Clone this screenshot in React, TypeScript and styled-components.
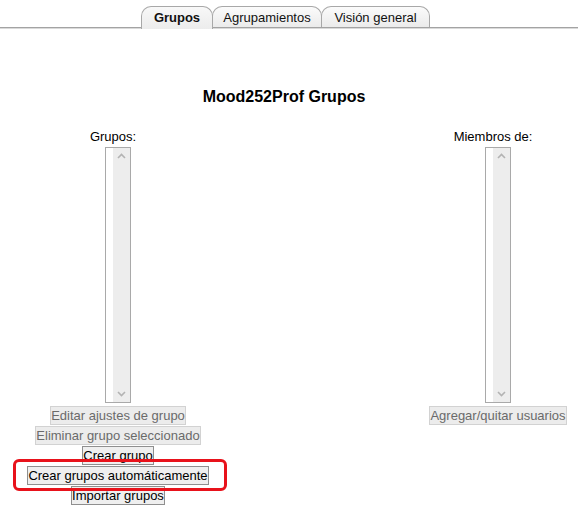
import React from "react";
import styled, { createGlobalStyle, css } from "styled-components";

const GlobalStyle = createGlobalStyle`
  html, body {
    margin: 0;
    padding: 0;
    background: #ffffff;
    font-family: "Liberation Sans", Arial, sans-serif;
    color: #000;
  }
`;

const Page = styled.div`
  width: 578px;
`;

const TabBar = styled.div`
  display: flex;
  justify-content: center;
  align-items: flex-end;
  padding: 6px 6px 0 0;
  height: 21px;
  border-bottom: 1px solid #a3a3a3;
  box-shadow: 0 1px 0 #dadada;
`;

const Tab = styled.div<{ $active?: boolean; $w: number }>`
  box-sizing: border-box;
  width: ${(p) => p.$w}px;
  height: 21px;
  margin-left: -1px;
  padding-top: 2px;
  border: 1px solid #a8a8a8;
  border-bottom: none;
  border-radius: 10px 10px 0 0;
  background: linear-gradient(#fbfbfb, #ebebeb);
  font-size: 13px;
  line-height: 17px;
  text-align: center;
  color: #111;
  white-space: nowrap;
  position: relative;
  ${(p) =>
    p.$active &&
    css`
      font-weight: bold;
      height: 23px;
      margin-bottom: -2px;
      background: linear-gradient(#f8f8f8, #ececec);
      z-index: 1;
    `}
`;

const Title = styled.h2`
  margin: 60px 0 0;
  padding-right: 10px;
  font-size: 16px;
  line-height: 18px;
  font-weight: bold;
  text-align: center;
`;

const Columns = styled.div`
  display: flex;
  justify-content: space-between;
  padding: 0 6px 0 8px;
  margin-top: 23px;
`;

const Column = styled.div<{ $w: number }>`
  width: ${(p) => p.$w}px;
  display: flex;
  flex-direction: column;
  align-items: center;
`;

const Label = styled.div`
  font-size: 13px;
  line-height: 16px;
  padding-right: 10px;
  margin-bottom: 2px;
`;

const ListBox = styled.div`
  box-sizing: border-box;
  width: 26px;
  height: 256px;
  border: 1px solid #a9a9a9;
  display: flex;
  background: #fff;
`;

const ListArea = styled.div`
  flex: 1;
`;

const ScrollTrack = styled.div`
  width: 17px;
  background: #ededed;
  display: flex;
  flex-direction: column;
  justify-content: space-between;
  align-items: center;
  padding: 5px 0;
`;

const Buttons = styled.div`
  margin-top: 3px;
  display: flex;
  flex-direction: column;
  align-items: center;
  gap: 1px;
`;

const Btn = styled.button<{ $disabled?: boolean }>`
  box-sizing: border-box;
  height: 19px;
  margin: 0;
  padding: 0;
  font-family: "Liberation Sans", Arial, sans-serif;
  font-size: 13px;
  line-height: 17px;
  white-space: nowrap;
  border-radius: 0;
  ${(p) =>
    p.$disabled
      ? css`
          border: 1px solid #d2d2d2;
          background: #ececec;
          color: #6a6a6a;
        `
      : css`
          border: 1px solid #8f8f8f;
          background: #efefef;
          color: #000;
        `}
`;

const Marked = styled.div`
  position: relative;
`;

const Highlight = styled.span`
  position: absolute;
  left: -14px;
  right: -18px;
  top: -7px;
  bottom: -6px;
  border: 3px solid #e8121b;
  border-radius: 6px;
  pointer-events: none;
`;

const Chevron = ({ up }: { up?: boolean }) => (
  <svg width="9" height="6" viewBox="0 0 9 6">
    <polyline
      points={up ? "1,5 4.5,1.5 8,5" : "1,1 4.5,4.5 8,1"}
      fill="none"
      stroke="#b3b3b3"
      strokeWidth="1.6"
    />
  </svg>
);

const Select = () => (
  <ListBox>
    <ListArea />
    <ScrollTrack>
      <Chevron up />
      <Chevron />
    </ScrollTrack>
  </ListBox>
);

export default function App() {
  return (
    <Page>
      <GlobalStyle />
      <TabBar>
        <Tab $active $w={72}>Grupos</Tab>
        <Tab $w={110}>Agrupamientos</Tab>
        <Tab $w={109}>Visión general</Tab>
      </TabBar>
      <Title>Mood252Prof Grupos</Title>
      <Columns>
        <Column $w={220}>
          <Label>Grupos:</Label>
          <Select />
          <Buttons>
            <Btn $disabled>Editar ajustes de grupo</Btn>
            <Btn $disabled>Eliminar grupo seleccionado</Btn>
            <Btn>Crear grupo</Btn>
            <Marked>
              <Btn>Crear grupos automáticamente</Btn>
              <Highlight />
            </Marked>
            <Btn>Importar grupos</Btn>
          </Buttons>
        </Column>
        <Column $w={148}>
          <Label>Miembros de:</Label>
          <Select />
          <Buttons>
            <Btn $disabled>Agregar/quitar usuarios</Btn>
          </Buttons>
        </Column>
      </Columns>
    </Page>
  );
}
